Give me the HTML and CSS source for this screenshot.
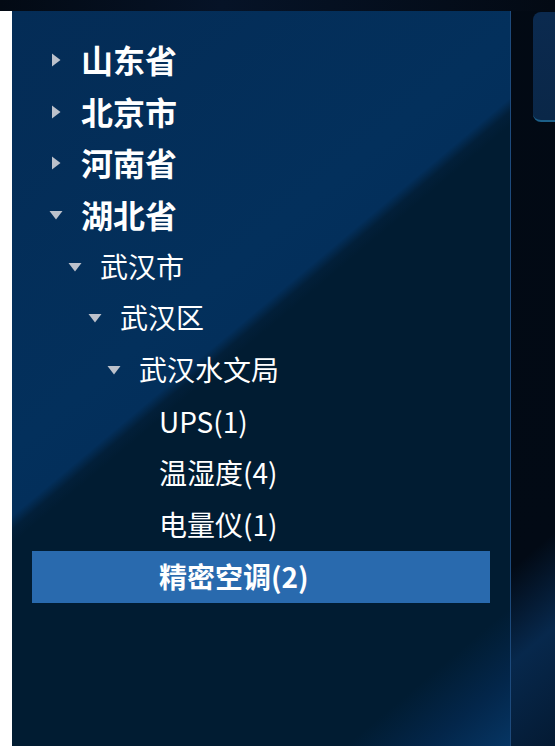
FILE: index.html
```html
<!DOCTYPE html>
<html lang="zh-CN">
<head>
<meta charset="utf-8">
<title>Tree</title>
<link rel="stylesheet" href="styles.css">
</head>
<body>
<div class="topbar"></div>
<div class="main">
  <div class="stage">
    <aside class="panel">
      <div class="tree">
        <div class="node lv1"><svg class="caret" viewBox="0 0 14 14"><polygon points="3,0.5 11.5,7 3,13.5"/></svg><span class="label">山东省</span></div>
        <div class="node lv1"><svg class="caret" viewBox="0 0 14 14"><polygon points="3,0.5 11.5,7 3,13.5"/></svg><span class="label">北京市</span></div>
        <div class="node lv1"><svg class="caret" viewBox="0 0 14 14"><polygon points="3,0.5 11.5,7 3,13.5"/></svg><span class="label">河南省</span></div>
        <div class="node lv1"><svg class="caret open" viewBox="0 0 14 14"><polygon points="3,0.5 11.5,7 3,13.5"/></svg><span class="label">湖北省</span></div>
        <div class="node lv2"><svg class="caret open" viewBox="0 0 14 14"><polygon points="3,0.5 11.5,7 3,13.5"/></svg><span class="label">武汉市</span></div>
        <div class="node lv3"><svg class="caret open" viewBox="0 0 14 14"><polygon points="3,0.5 11.5,7 3,13.5"/></svg><span class="label">武汉区</span></div>
        <div class="node lv4"><svg class="caret open" viewBox="0 0 14 14"><polygon points="3,0.5 11.5,7 3,13.5"/></svg><span class="label">武汉水文局</span></div>
        <div class="node lv5"><span class="caret leaf"></span><span class="label">UPS(1)</span></div>
        <div class="node lv5"><span class="caret leaf"></span><span class="label">温湿度(4)</span></div>
        <div class="node lv5"><span class="caret leaf"></span><span class="label">电量仪(1)</span></div>
        <div class="node lv5 current"><span class="caret leaf"></span><span class="label">精密空调(2)</span></div>
      </div>
    </aside>
    <section class="side">
      <div class="card"></div>
    </section>
  </div>
</div>
</body>
</html>
```

FILE: styles.css
```css
html, body {
  margin: 0;
  padding: 0;
  height: 100%;
}
body {
  background: #ffffff;
  font-family: "Noto Sans CJK SC", "Noto Sans", sans-serif;
  overflow: hidden;
  display: flex;
  flex-direction: column;
}
.topbar {
  height: 11px;
  flex: none;
  background: linear-gradient(90deg, #030a14 0%, #061327 40%, #030a14 100%);
}
.main {
  flex: 1;
  display: flex;
  padding-left: 12px;
  min-height: 0;
}
.stage {
  flex: 1;
  display: flex;
  background: linear-gradient(140deg, #020913 0%, #020a15 82%, #07284c 90%, #041a33 100%);
}
.panel {
  flex: none;
  width: 499px;
  box-sizing: border-box;
  border-right: 1px solid #1d4a7c;
  background: linear-gradient(140deg, #042c56 0%, #03305c 38%, #032f5b 43.8%, #021f39 45%, #011c32 46.2%, #011c32 88%, #03264a 94%, #063563 100%);
  padding: 23px 20px 0 20px;
}
.tree {
  display: flex;
  flex-direction: column;
}
.node {
  height: 51.7px;
  display: flex;
  align-items: center;
  color: #ffffff;
  font-size: 28px;
  line-height: 1;
  white-space: nowrap;
}
.caret {
  width: 14px;
  height: 14px;
  flex: none;
  fill: #bcc1cb;
  margin-right: 18px;
}
.caret.open {
  transform: rotate(90deg);
}
.caret.leaf {
  display: inline-block;
}
.label {
  position: relative;
  top: -1px;
}
.lv1 { padding-left: 17px; font-size: 32px; font-weight: 700; }
.lv2 { padding-left: 36px; }
.lv3 { padding-left: 56px; }
.lv4 { padding-left: 75px; }
.lv5 { padding-left: 95px; }
.node.current {
  background: #296aae;
  font-weight: 700;
}
.side {
  flex: 1;
  padding: 1px 0 0 22px;
}
.card {
  height: 108px;
  border-radius: 8px 0 0 8px;
  background: linear-gradient(180deg, #0b2a4f 0%, #0a2748 100%);
  border-bottom: 2px solid #1c5f88;
  margin-right: -10px;
}
```
